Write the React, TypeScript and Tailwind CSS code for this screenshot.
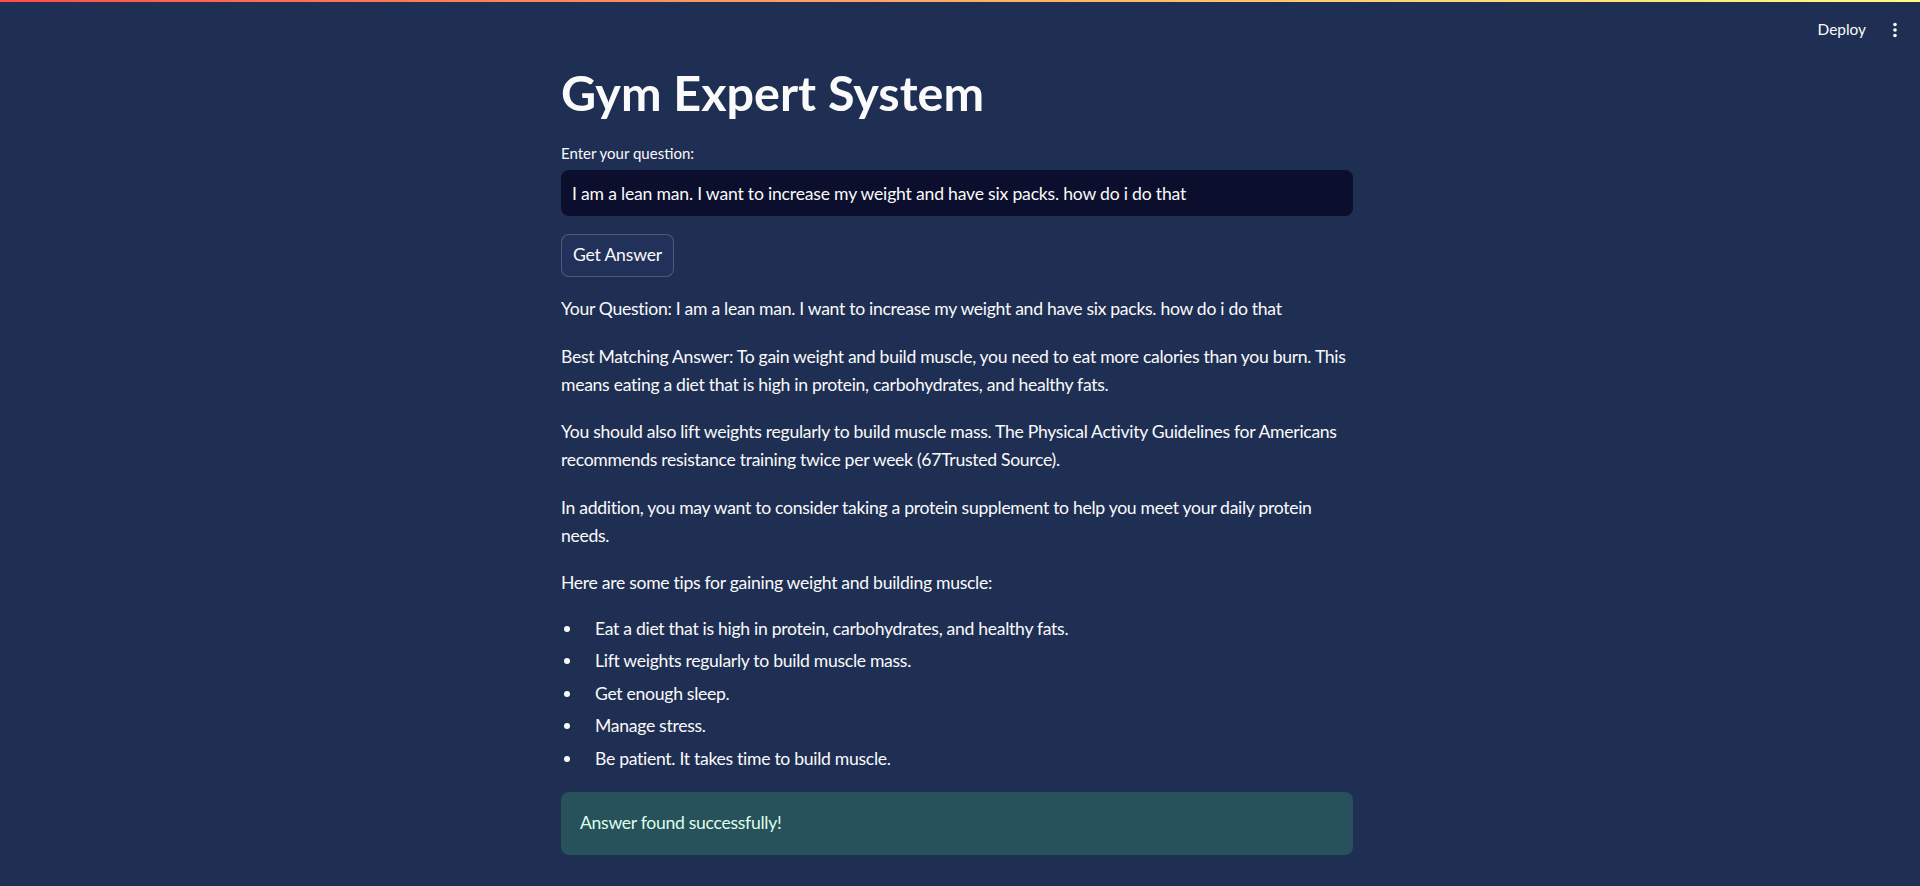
import { useState } from "react";

const tips = [
  "Eat a diet that is high in protein, carbohydrates, and healthy fats.",
  "Lift weights regularly to build muscle mass.",
  "Get enough sleep.",
  "Manage stress.",
  "Be patient. It takes time to build muscle.",
];

export default function App() {
  const [question, setQuestion] = useState(
    "I am a lean man. I want to increase my weight and have six packs. how do i do that"
  );

  return (
    <div className="min-h-[886px] bg-[#1f2f53] text-[#fafafa] font-['Lato','Noto_Sans',sans-serif]">
      {/* Header */}
      <div className="h-[2px] bg-gradient-to-r from-[#ff4b4b] to-[#fffd80]" />
      <div className="flex h-[56px] items-center justify-end pr-[20px]">
        <button className="text-[15.4px] text-[#fafafa] mr-[26px]">Deploy</button>
        <svg width="6" height="16" viewBox="0 0 6 16" className="mr-[2px]">
          <circle cx="3" cy="2.5" r="1.8" fill="#fafafa" />
          <circle cx="3" cy="8" r="1.8" fill="#fafafa" />
          <circle cx="3" cy="13.5" r="1.8" fill="#fafafa" />
        </svg>
      </div>

      {/* Main */}
      <div className="flex justify-center pr-[6px]">
        <div className="w-[792px] pt-[5px] pb-[30px]">
          <h1 className="text-[48.5px] font-bold leading-[58px]">Gym Expert System</h1>

          <label className="mt-[22px] block text-[15px] leading-[20px]">Enter your question:</label>
          <input
            value={question}
            onChange={(e) => setQuestion(e.target.value)}
            className="mt-[7px] block h-[46px] w-full rounded-[8px] bg-[#0b0e2c] px-[11px] text-[17.6px] tracking-[-0.2px] text-[#fafafa] outline-none"
          />

          <button className="mt-[18px] h-[43px] w-[113px] rounded-[8px] border border-[#fafafa]/20 bg-[#22315a] text-[17.6px] tracking-[-0.2px]">
            Get Answer
          </button>

          <div className="mt-[18px] text-[17.6px] leading-[28px] tracking-[-0.3px]">
            <p className="mb-[19.5px]">
              Your Question: I am a lean man. I want to increase my weight and have six packs. how do i do that
            </p>
            <p className="mb-[19.5px]">
              Best Matching Answer: To gain weight and build muscle, you need to eat more calories than you burn. This
              means eating a diet that is high in protein, carbohydrates, and healthy fats.
            </p>
            <p className="mb-[19.5px]">
              You should also lift weights regularly to build muscle mass. The Physical Activity Guidelines for Americans
              recommends resistance training twice per week (67Trusted Source).
            </p>
            <p className="mb-[19.5px]">
              In addition, you may want to consider taking a protein supplement to help you meet your daily protein
              needs.
            </p>
            <p className="mb-[18px]">Here are some tips for gaining weight and building muscle:</p>
            <ul className="flex flex-col gap-[4.4px]">
              {tips.map((t) => (
                <li key={t} className="flex items-center">
                  <span className="ml-[3px] mr-[25px] h-[6px] w-[6px] rounded-full bg-[#fafafa]" />
                  <span>{t}</span>
                </li>
              ))}
            </ul>
          </div>

          <div className="mt-[19px] flex h-[63px] items-center rounded-[8px] bg-[#27525b] px-[19px] text-[17.6px] tracking-[-0.3px] text-[#dffde9]">
            Answer found successfully!
          </div>
        </div>
      </div>
    </div>
  );
}
